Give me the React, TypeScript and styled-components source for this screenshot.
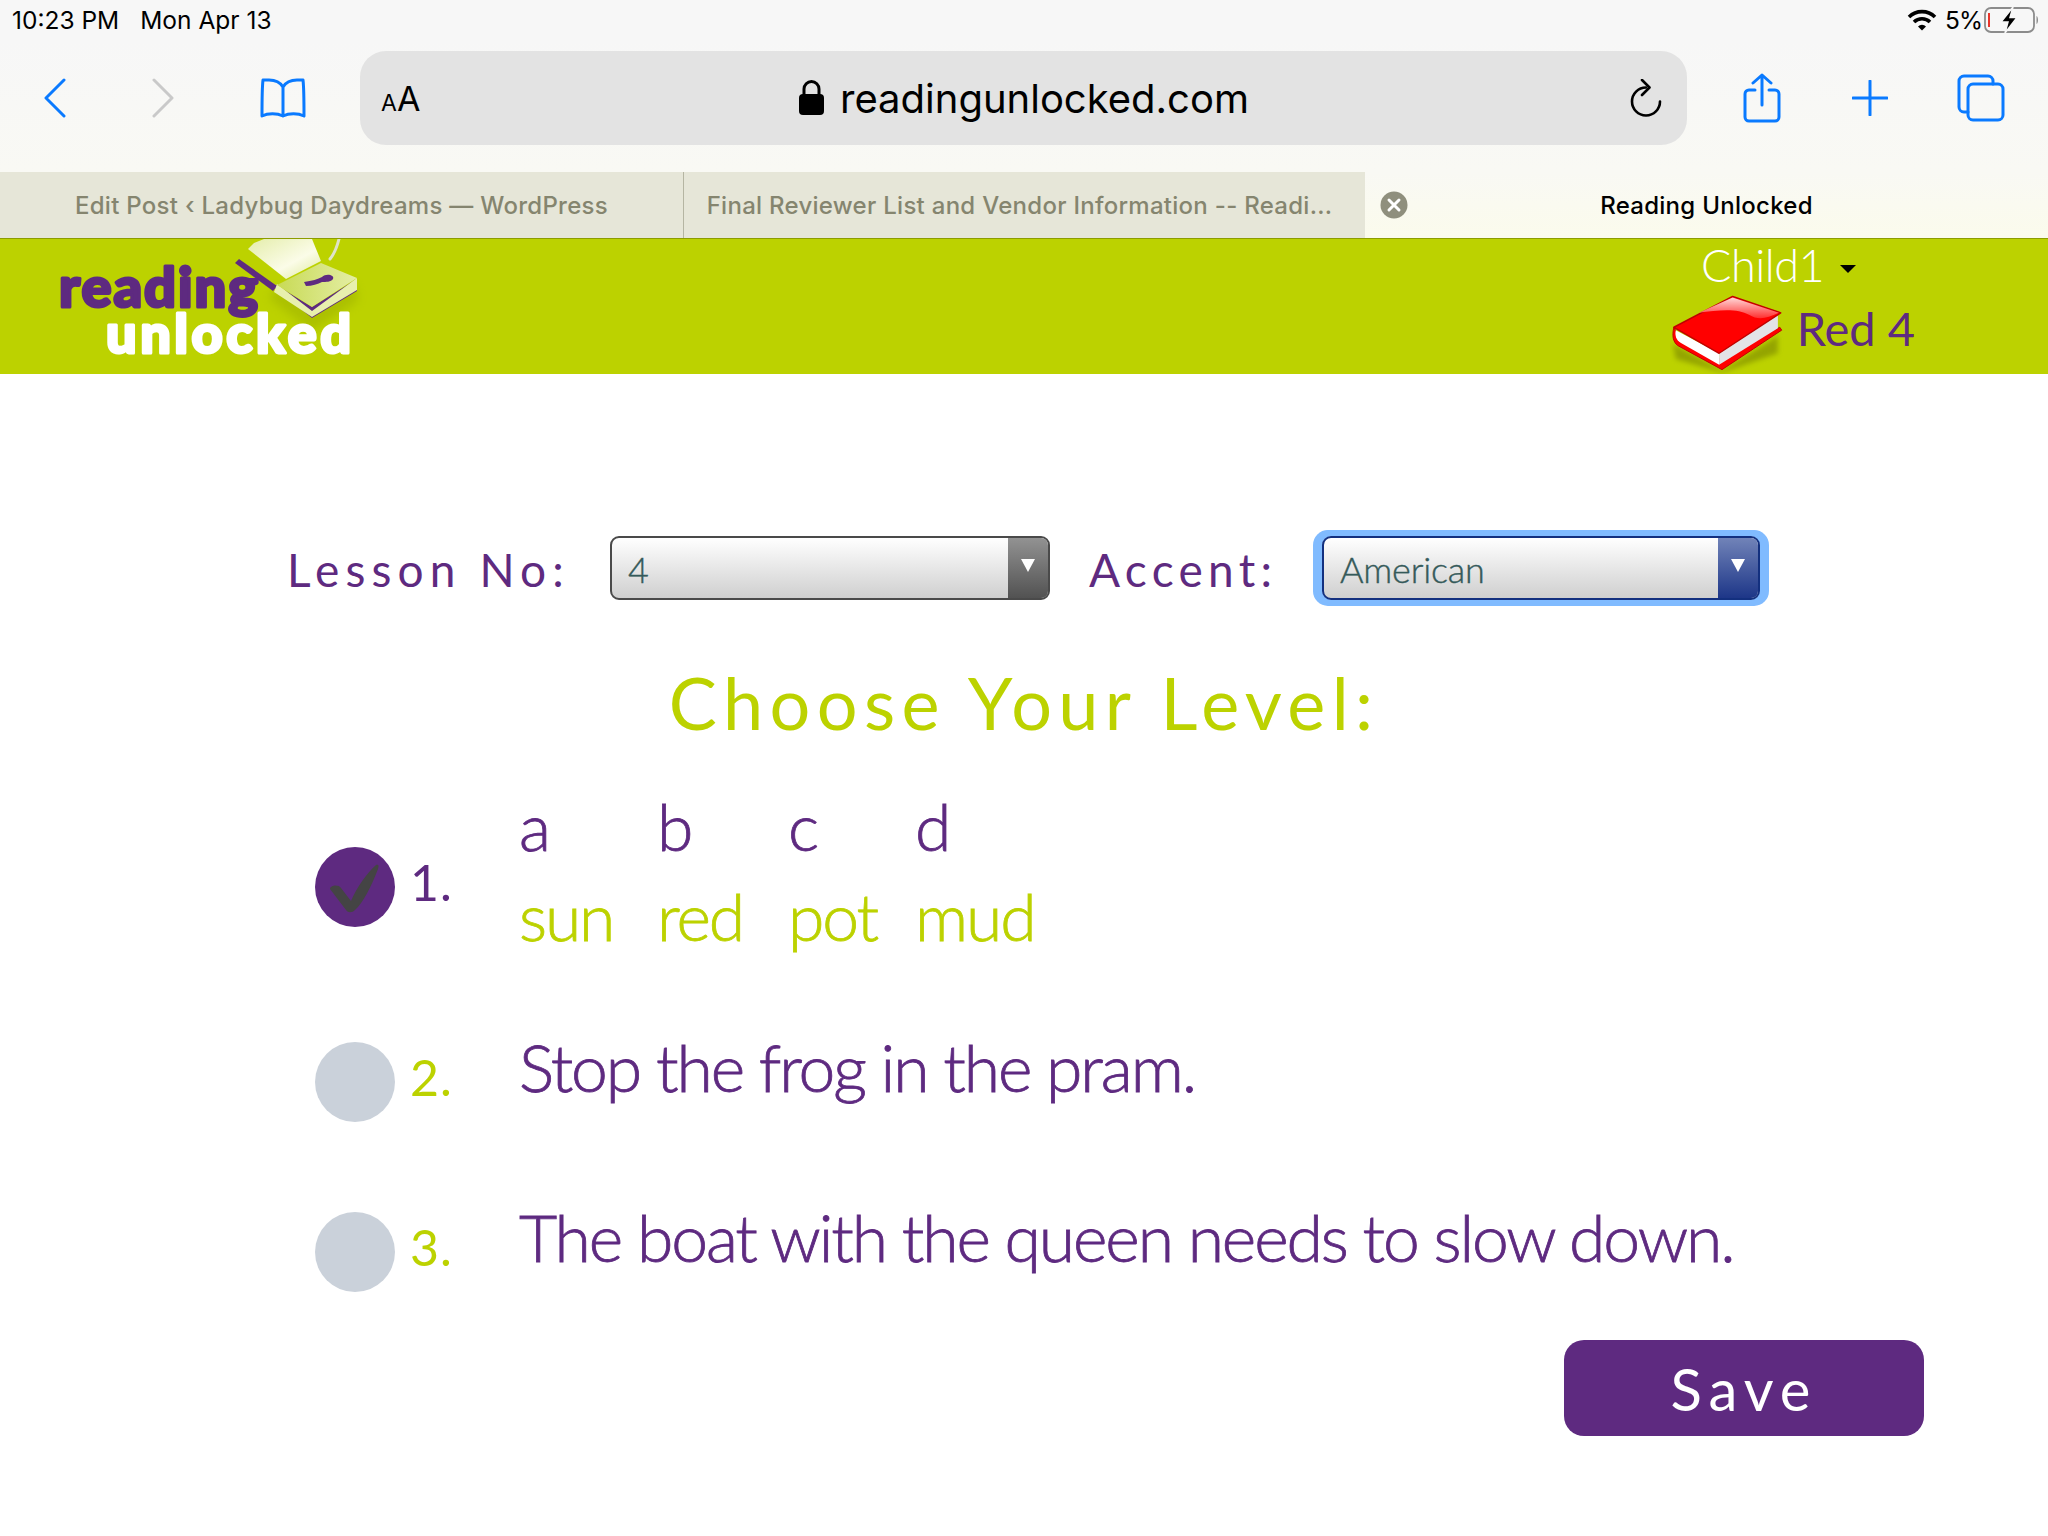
import React from 'react';
import styled, { createGlobalStyle } from 'styled-components';

const PURPLE = '#5e2a80';
const LIME = '#bcd200';
const BLUE = '#0a7aff';

const GlobalStyle = createGlobalStyle`
  html, body {
    margin: 0;
    padding: 0;
    background: #fff;
  }
  * {
    box-sizing: border-box;
  }
`;

const Page = styled.div`
  width: 2048px;
  height: 1536px;
  overflow: hidden;
  display: flex;
  flex-direction: column;
  font-family: Lato, "Open Sans", sans-serif;
`;

const StatusBar = styled.div`
  height: 40px;
  display: flex;
  align-items: center;
  justify-content: space-between;
  padding: 0 8px 0 12px;
  background: #f7f7f7;
  color: #000;
  font-family: Inter, Roboto, sans-serif;
  font-size: 24.500px;
`;

const StatusLeft = styled.div`
  display: flex;
  gap: 21px;
`;

const StatusRight = styled.div`
  display: flex;
  align-items: center;
  gap: 2px;
  letter-spacing: -1px;
  svg:first-child {
    margin-right: 6px;
  }
`;

const Toolbar = styled.div`
  height: 132px;
  display: flex;
  align-items: center;
  padding: 11px 0 27px 44px;
  background: linear-gradient(#f7f7f7, #f9f9f4);
`;

const ToolIcon = styled.svg<{ $left: number; $disabled?: boolean }>`
  flex: none;
  margin-left: ${(p) => p.$left}px;
  fill: none;
  stroke: ${(p) => (p.$disabled ? '#c9c9c9' : BLUE)};
  stroke-width: 3;
  stroke-linecap: round;
  stroke-linejoin: round;
`;

const UrlBar = styled.div`
  width: 1327px;
  height: 94px;
  margin-left: 54px;
  flex: none;
  display: flex;
  align-items: center;
  justify-content: space-between;
  padding: 0 24px 0 21px;
  background: #e3e3e3;
  border-radius: 26px;
`;

const TextSize = styled.div`
  display: flex;
  align-items: baseline;
  font-family: Inter, Roboto, sans-serif;
  color: #000;
  font-size: 34px;
  width: 40px;
`;

const SmallA = styled.span`
  font-size: 23px;
`;

const Domain = styled.div`
  display: flex;
  align-items: center;
  gap: 15px;
  margin-right: 3px;
  font-family: Inter, Roboto, sans-serif;
  font-size: 40px;
  color: #000;
`;

const TabBar = styled.div`
  height: 67px;
  display: grid;
  grid-template-columns: 683px 682px 1fr;
  font-family: Inter, Roboto, sans-serif;
  font-size: 24px;
  font-weight: 500;
  letter-spacing: 0.28px;
  border-bottom: 1px solid #8d9c00;
`;

const Tab = styled.div<{ $active?: boolean }>`
  position: relative;
  display: flex;
  align-items: center;
  justify-content: center;
  background: ${(p) => (p.$active ? 'linear-gradient(#f9f9f4, #fbfbec)' : '#e6e6d8')};
  color: ${(p) => (p.$active ? '#000' : '#85856f')};
  border-left: ${(p) => (p.$active ? 'none' : '1px solid #b5b5a2')};
  &:first-child {
    border-left: none;
  }
  &:nth-child(2) {
    padding-right: 10px;
  }
`;

const TabClose = styled.svg`
  position: absolute;
  left: 15px;
  top: 19px;
`;

const Header = styled.header`
  height: 135px;
  display: flex;
  justify-content: space-between;
  padding: 0 133px 0 50px;
  background: ${LIME};
`;

const ProfileBlock = styled.div`
  width: 245px;
  display: flex;
  flex-direction: column;
`;

const ChildRow = styled.div`
  display: flex;
  align-items: center;
  gap: 16px;
  height: 57px;
  padding: 0 0 2px 31px;
  color: #fff;
  font-size: 45px;
  font-weight: 300;
  letter-spacing: -0.5px;
  line-height: 1;
`;

const Caret = styled.span`
  width: 0;
  height: 0;
  margin-top: 6px;
  border-left: 8px solid transparent;
  border-right: 8px solid transparent;
  border-top: 8px solid #000;
`;

const LevelRow = styled.div`
  display: flex;
  align-items: flex-start;
  gap: 13px;
`;

const LevelName = styled.span`
  margin-top: 6px;
  color: ${PURPLE};
  font-size: 47px;
  font-weight: 400;
  line-height: 1.2;
  white-space: nowrap;
`;

const Main = styled.main`
  flex: 1;
  display: flex;
  flex-direction: column;
  padding-top: 162px;
`;

const Selectors = styled.div`
  display: flex;
  align-items: center;
  height: 64px;
  padding-left: 287px;
`;

const FieldLabel = styled.label<{ $width: number; $spacing: number }>`
  width: ${(p) => p.$width}px;
  flex: none;
  padding-top: 3px;
  color: ${PURPLE};
  font-size: 46px;
  font-weight: 400;
  letter-spacing: ${(p) => p.$spacing}em;
  white-space: nowrap;
`;

const Select = styled.div<{ $width: number; $focused?: boolean }>`
  width: ${(p) => p.$width}px;
  height: 64px;
  flex: none;
  display: flex;
  overflow: hidden;
  margin-right: 39px;
  border: 2px solid ${(p) => (p.$focused ? '#13307f' : '#4a4a4a')};
  border-radius: 9px;
  box-shadow: ${(p) =>
    p.$focused ? '0 0 0 6px #80bbff, 3px 0 0 6px #80bbff, -3px 0 0 6px #80bbff' : 'none'};
  background: linear-gradient(#fff, #cfcfcf);
`;

const SelectValue = styled.div`
  flex: 1;
  padding-left: 16px;
  color: #355a5a;
  font-size: 36px;
  font-weight: 300;
  letter-spacing: -0.2px;
  line-height: 63px;
  -webkit-text-stroke: 0.400px #355a5a;
`;

const SelectArrow = styled.div<{ $focused?: boolean }>`
  width: 40px;
  display: flex;
  align-items: center;
  justify-content: center;
  padding-bottom: 6px;
  background: ${(p) =>
    p.$focused ? 'linear-gradient(#7183b8, #1d3688)' : 'linear-gradient(#929292, #525252)'};
  &::after {
    content: '';
    width: 0;
    height: 0;
    border-left: 7px solid transparent;
    border-right: 7px solid transparent;
    border-top: 13px solid #fff;
  }
`;

const Heading = styled.h1`
  margin: 54px 0 52px;
  height: 96px;
  color: ${LIME};
  font-size: 72px;
  font-weight: 400;
  letter-spacing: 0.088em;
  line-height: 96px;
  text-align: center;
`;

const Levels = styled.div`
  display: flex;
  flex-direction: column;
  gap: 50px;
  padding-left: 315px;
`;

const LevelItem = styled.div<{ $height: number }>`
  height: ${(p) => p.$height}px;
  display: flex;
  align-items: center;
`;

const Radio = styled.div<{ $checked?: boolean }>`
  width: 80px;
  height: 80px;
  flex: none;
  border-radius: 50%;
  background: ${(p) => (p.$checked ? PURPLE : '#cad1da')};
`;

const Num = styled.div<{ $lime?: boolean }>`
  width: 124px;
  flex: none;
  padding: 0 0 11px 15px;
  color: ${(p) => (p.$lime ? LIME : PURPLE)};
  font-size: 50px;
  font-weight: 400;
  letter-spacing: 0.02em;
`;

const Sentence = styled.div`
  padding-bottom: 32px;
  color: ${PURPLE};
  font-size: 66px;
  font-weight: 300;
  letter-spacing: -2.100px;
  white-space: nowrap;
  -webkit-text-stroke: 0.800px ${PURPLE};
`;

const SoundGrid = styled.div`
  display: grid;
  grid-template-columns: 138px 131px 127px auto;
  grid-auto-rows: 90px;
  align-items: center;
  padding-bottom: 32px;
  font-size: 66px;
  font-weight: 300;
  letter-spacing: -2.100px;
  line-height: 1;
`;

const Sound = styled.div<{ $lime?: boolean }>`
  color: ${(p) => (p.$lime ? LIME : PURPLE)};
  -webkit-text-stroke: 0.800px ${(p) => (p.$lime ? LIME : PURPLE)};
`;

const SaveRow = styled.div`
  display: flex;
  justify-content: flex-end;
  margin-top: 28px;
  padding-right: 124px;
`;

const SaveButton = styled.button`
  width: 360px;
  height: 96px;
  padding-top: 2px;
  border: none;
  border-radius: 20px;
  background: ${PURPLE};
  color: #fff;
  font-family: Lato, sans-serif;
  font-size: 58px;
  font-weight: 400;
  letter-spacing: 0.12em;
`;

const Wifi = () => (
  <svg width="30" height="22" viewBox="0 0 30 22">
    <path d="M2 8a18.500 18.500 0 0 1 26 0" fill="none" stroke="#000" strokeWidth="3.600" />
    <path d="M7 13a11.500 11.500 0 0 1 16 0" fill="none" stroke="#000" strokeWidth="3.600" />
    <path d="M11 17.500a5.500 5.500 0 0 1 8 0L15 21.500z" fill="#000" />
  </svg>
);

const Battery = () => (
  <svg width="56" height="26" viewBox="0 0 56 26">
    <rect x="1" y="1" width="49" height="24" rx="6" fill="none" stroke="#8c8c8c" strokeWidth="1.800" />
    <rect x="4" y="6" width="2" height="14" fill="#e8352b" />
    <path d="M52.500 9c2 .6 2 7.400 0 8z" fill="#8c8c8c" />
    <path d="M29 0 17 15h7L21 26l12-15.500h-7z" fill="#000" stroke="#f7f7f7" strokeWidth="1.500" />
  </svg>
);

const Logo = () => (
  <svg width="320" height="136" viewBox="0 0 320 136">
    <defs>
      <filter id="logoBlur" x="-30%" y="-30%" width="160%" height="160%">
        <feGaussianBlur stdDeviation="5" />
      </filter>
      <linearGradient id="logoPage" x1="0" y1="0" x2="1" y2="1">
        <stop offset="0" stopColor="#e4edaa" />
        <stop offset="0.6" stopColor="#fbfce8" />
        <stop offset="1" stopColor="#dce89a" />
      </linearGradient>
      <linearGradient id="logoTop" x1="0" y1="0" x2="1" y2="0">
        <stop offset="0" stopColor="#c8da55" />
        <stop offset="1" stopColor="#e4eea5" />
      </linearGradient>
    </defs>
    <path d="M225 48 262 68 305 44 308 62 262 92 220 60z" fill="#93a500" opacity="0.4" filter="url(#logoBlur)" />
    <path d="M289 0 C287 8 285 14 280 20" fill="none" stroke="#dfe3c8" strokeWidth="3" strokeLinecap="round" />
    <path d="M189 20 227 47 223 52 185 24z" fill={PURPLE} />
    <path d="M204 4 214 0H262L271 22 236 40 198 10z" fill="url(#logoPage)" />
    <path d="M222 47 262 79 307 52 307 40 262 68 226 46z" fill={PURPLE} />
    <path d="M227 45 262 72 307 39 307 51 262 78 224 53z" fill="#e8f0ae" />
    <path d="M271 24 307 39 262 68 227 46z" fill="url(#logoTop)" />
    <path d="M254 43C262 42 268 40 272 38 276 34 285 36 283 40 281 43 276 43 272 43 268 45 262 47 256 47z" fill={PURPLE} />
    <text x="9" y="68" fontFamily="Lato, sans-serif" fontWeight="900" fontSize="56" letterSpacing="1" fill={PURPLE} textLength="200" lengthAdjust="spacing" stroke={PURPLE} strokeWidth="3" strokeLinejoin="round">reading</text>
    <text x="56" y="114" fontFamily="Lato, sans-serif" fontWeight="900" fontSize="54" letterSpacing="1" fill="#fff" textLength="246" lengthAdjust="spacing" stroke="#fff" strokeWidth="3" strokeLinejoin="round">unlocked</text>
  </svg>
);

const RedBook = () => (
  <svg width="118" height="80" viewBox="0 0 118 80">
    <defs>
      <filter id="bookBlur" x="-20%" y="-30%" width="140%" height="160%">
        <feGaussianBlur stdDeviation="3" />
      </filter>
      <linearGradient id="bookGloss" x1="0.5" y1="0" x2="0.5" y2="1">
        <stop offset="0" stopColor="#ffd9d9" />
        <stop offset="1" stopColor="#ff3030" />
      </linearGradient>
    </defs>
    <path d="M3 50 54 78 112 42 112 60 54 80 6 66z" fill="#7f8c00" opacity="0.65" filter="url(#bookBlur)" />
    <path d="M4 33C2 42 3 48 8 52L54 77 116 36 114 33 52 66 10 44z" fill="#f00" stroke="#c00000" strokeWidth="1" />
    <path d="M6 36 51 60V72L11 49C6 46 5 41 6 36z" fill="#fff" />
    <path d="M51 60 112 20V34L51 72z" fill="#e3e3e6" />
    <path d="M65 1 115 18 51 60 4 33z" fill="#f00" stroke="#c00000" strokeWidth="1.500" strokeLinejoin="round" />
    <path d="M65 2 113 18C100 24 92 26 82 20 70 13 50 15 30 18z" fill="url(#bookGloss)" />
  </svg>
);

const App: React.FC = () => {
  return (
    <Page>
      <GlobalStyle />
      <StatusBar>
        <StatusLeft>
          <span>10:23 PM</span>
          <span>Mon Apr 13</span>
        </StatusLeft>
        <StatusRight>
          <Wifi />
          <span>5%</span>
          <Battery />
        </StatusRight>
      </StatusBar>

      <Toolbar>
        <ToolIcon $left={0} width="22" height="40" viewBox="0 0 22 40">
          <path d="M20 2 2 20l18 18" />
        </ToolIcon>
        <ToolIcon $left={86} $disabled width="22" height="40" viewBox="0 0 22 40">
          <path d="M2 2l18 18L2 38" />
        </ToolIcon>
        <ToolIcon $left={86} width="46" height="40" viewBox="0 0 46 40">
          <path d="M23 9C20 4 15 2 9 2H3C2 10 2 28 2 38c6-3 15-3 21 0 6-3 15-3 21 0 0-10 0-28-1-36h-6c-6 0-11 2-14 7zM23 9v29" />
        </ToolIcon>
        <UrlBar>
          <TextSize>
            <SmallA>A</SmallA>A
          </TextSize>
          <Domain>
            <svg width="27" height="36" viewBox="0 0 27 36">
              <path d="M6 15V9a7.500 7.500 0 0 1 15 0v6" fill="none" stroke="#000" strokeWidth="3" />
              <rect x="1" y="14" width="25" height="21" rx="4" fill="#000" />
            </svg>
            <span>readingunlocked.com</span>
          </Domain>
          <svg width="34" height="38" viewBox="0 0 34 38" fill="none" stroke="#000" strokeWidth="2.600" strokeLinecap="round" strokeLinejoin="round">
            <path d="M17 8.500A14 14 0 1 0 31 22.500" />
            <path d="M13 1l7.500 7.500L13 16" />
          </svg>
        </UrlBar>
        <ToolIcon $left={56} width="38" height="50" viewBox="0 0 38 50">
          <path d="M12 17H6a4 4 0 0 0-4 4v23a4 4 0 0 0 4 4h26a4 4 0 0 0 4-4V21a4 4 0 0 0-4-4h-6M19 32V2M10 10l9-8 9 8" />
        </ToolIcon>
        <ToolIcon $left={71} width="36" height="36" viewBox="0 0 36 36">
          <path d="M18 1v34M1 18h34" />
        </ToolIcon>
        <ToolIcon $left={69} width="48" height="48" viewBox="0 0 48 48">
          <path d="M11 38H7a5 5 0 0 1-5-5V7a5 5 0 0 1 5-5h24a5 5 0 0 1 5 5v3" />
          <rect x="11" y="10" width="35" height="36" rx="5" />
        </ToolIcon>
      </Toolbar>

      <TabBar>
        <Tab>Edit Post ‹ Ladybug Daydreams — WordPress</Tab>
        <Tab>Final Reviewer List and Vendor Information -- Readi...</Tab>
        <Tab $active>
          <TabClose width="28" height="28" viewBox="0 0 28 28">
            <circle cx="14" cy="14" r="13.500" fill="#8f8f7d" />
            <path d="M9 9l10 10M19 9L9 19" stroke="#fff" strokeWidth="3" strokeLinecap="round" />
          </TabClose>
          Reading Unlocked
        </Tab>
      </TabBar>

      <Header>
        <Logo />
        <ProfileBlock>
          <ChildRow>
            Child1
            <Caret />
          </ChildRow>
          <LevelRow>
            <RedBook />
            <LevelName>Red 4</LevelName>
          </LevelRow>
        </ProfileBlock>
      </Header>

      <Main>
        <Selectors>
          <FieldLabel $width={323} $spacing={0.133}>Lesson No:</FieldLabel>
          <Select $width={440}>
            <SelectValue>4</SelectValue>
            <SelectArrow />
          </Select>
          <FieldLabel $width={233} $spacing={0.115}>Accent:</FieldLabel>
          <Select $width={438} $focused>
            <SelectValue>American</SelectValue>
            <SelectArrow $focused />
          </Select>
        </Selectors>

        <Heading>Choose Your Level:</Heading>

        <Levels>
          <LevelItem $height={170}>
            <Radio $checked>
              <svg width="80" height="80" viewBox="0 0 80 80">
                <path d="M15 42C15 38 24 37 26 41L36 54C42 40 52 26 61 18 64 17 64 19 63 22 57 38 48 56 40 63 37 66 33 66 31 63z" fill="#444" />
              </svg>
            </Radio>
            <Num>1.</Num>
            <SoundGrid>
              <Sound>a</Sound>
              <Sound>b</Sound>
              <Sound>c</Sound>
              <Sound>d</Sound>
              <Sound $lime>sun</Sound>
              <Sound $lime>red</Sound>
              <Sound $lime>pot</Sound>
              <Sound $lime>mud</Sound>
            </SoundGrid>
          </LevelItem>
          <LevelItem $height={120}>
            <Radio />
            <Num $lime>2.</Num>
            <Sentence>Stop the frog in the pram.</Sentence>
          </LevelItem>
          <LevelItem $height={120}>
            <Radio />
            <Num $lime>3.</Num>
            <Sentence>The boat with the queen needs to slow down.</Sentence>
          </LevelItem>
        </Levels>

        <SaveRow>
          <SaveButton>Save</SaveButton>
        </SaveRow>
      </Main>
    </Page>
  );
};

export default App;
